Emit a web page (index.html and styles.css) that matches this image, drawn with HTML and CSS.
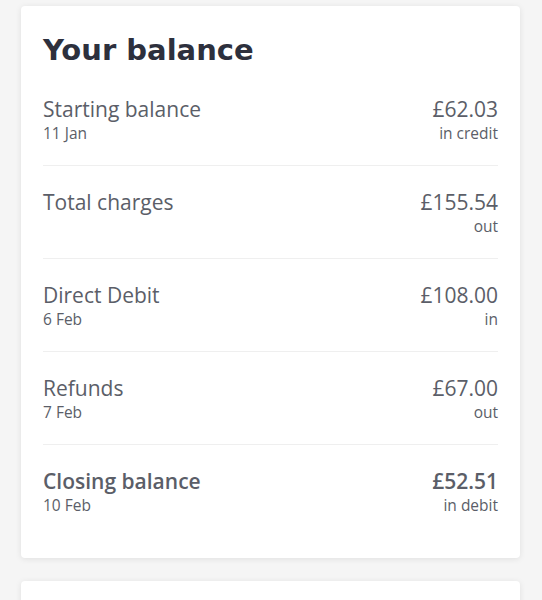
FILE: index.html
```html
<!DOCTYPE html>
<html lang="en">
<head>
<meta charset="utf-8">
<link rel="stylesheet" href="styles.css">
</head>
<body>
<main class="page">
  <section class="card">
    <h1 class="card-title">Your balance</h1>
    <div class="row">
      <div class="left"><div class="label">Starting balance</div><div class="sub">11 Jan</div></div>
      <div class="right"><div class="amount">£62.03</div><div class="sub">in credit</div></div>
    </div>
    <div class="row">
      <div class="left"><div class="label">Total charges</div></div>
      <div class="right"><div class="amount">£155.54</div><div class="sub">out</div></div>
    </div>
    <div class="row">
      <div class="left"><div class="label">Direct Debit</div><div class="sub">6 Feb</div></div>
      <div class="right"><div class="amount">£108.00</div><div class="sub">in</div></div>
    </div>
    <div class="row">
      <div class="left"><div class="label">Refunds</div><div class="sub">7 Feb</div></div>
      <div class="right"><div class="amount">£67.00</div><div class="sub">out</div></div>
    </div>
    <div class="row row-total">
      <div class="left"><div class="label">Closing balance</div><div class="sub">10 Feb</div></div>
      <div class="right"><div class="amount">£52.51</div><div class="sub">in debit</div></div>
    </div>
  </section>
  <section class="card card-next"></section>
</main>
</body>
</html>
```
FILE: styles.css
```css
* { box-sizing: border-box; }
html, body { margin: 0; padding: 0; }
body {
  background: #f5f5f5;
  font-family: "Open Sans", "Liberation Sans", sans-serif;
  color: #5b5e68;
}
.page {
  padding: 6px 22px 0 21px;
  display: flex;
  flex-direction: column;
  gap: 23px;
}
.card {
  background: #fff;
  border-radius: 4px;
  box-shadow: 0 1px 6px rgba(0,0,0,0.09);
  padding: 24px 22px 21px 22px;
}
.card-next { height: 60px; }
.card-title {
  margin: 0 0 3px 0;
  font-family: "DejaVu Sans", sans-serif;
  font-weight: 700;
  font-size: 29px;
  line-height: 40px;
  color: #2d303d;
}
.row {
  display: flex;
  justify-content: space-between;
  padding: 23px 0 21px 0;
  border-bottom: 1px solid #efefef;
}
.row-total { border-bottom: none; }
.label, .amount {
  font-size: 21px;
  line-height: 26px;
}
.sub {
  font-size: 15.5px;
  line-height: 22px;
}
.right { text-align: right; }
.row-total .label, .row-total .amount { font-weight: 600; }
```
